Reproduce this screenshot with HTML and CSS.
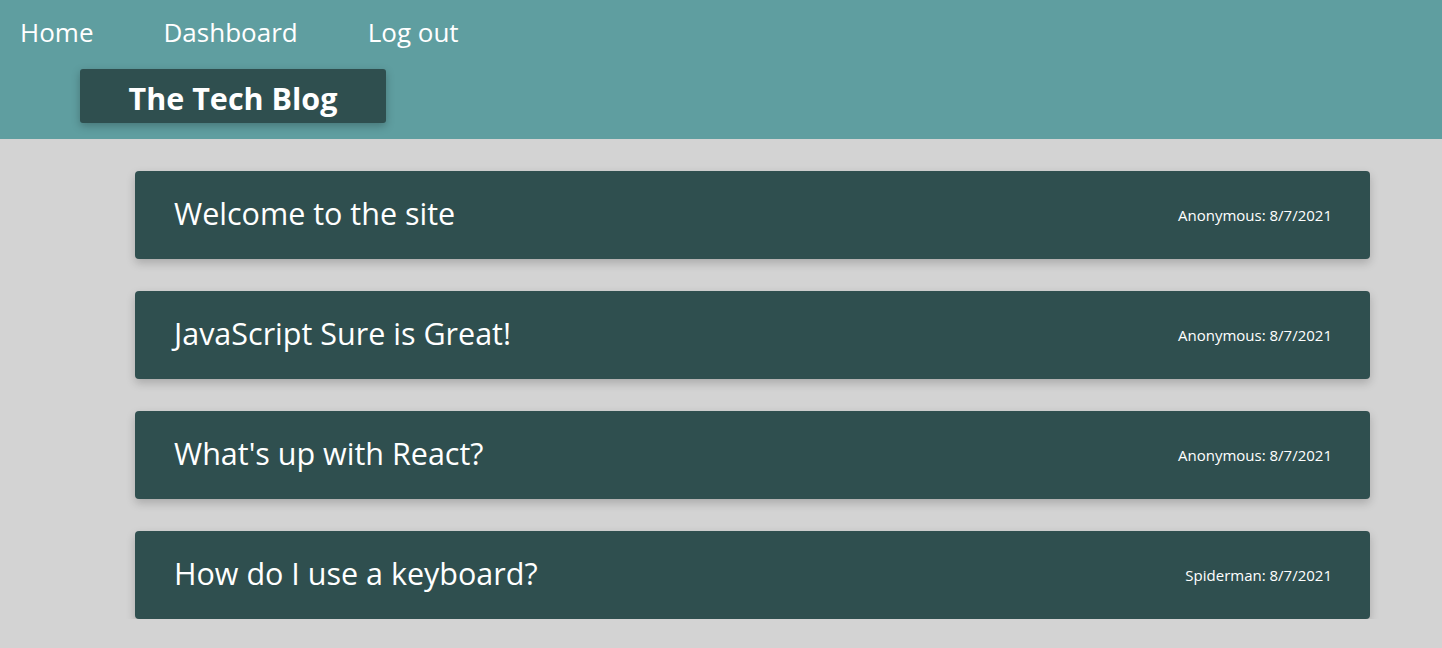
FILE: index.html
```html
<!DOCTYPE html>
<html lang="en">
<head>
<meta charset="utf-8">
<title>The Tech Blog</title>
<link rel="stylesheet" href="styles.css">
</head>
<body>
<header class="site-header">
  <nav class="nav">
    <a class="nav-link" href="#">Home</a>
    <a class="nav-link" href="#">Dashboard</a>
    <a class="nav-link" href="#">Log out</a>
  </nav>
  <h1 class="brand">The Tech Blog</h1>
</header>
<main class="posts">
  <article class="post">
    <h2 class="post-title">Welcome to the site</h2>
    <span class="post-meta">Anonymous: 8/7/2021</span>
  </article>
  <article class="post">
    <h2 class="post-title">JavaScript Sure is Great!</h2>
    <span class="post-meta">Anonymous: 8/7/2021</span>
  </article>
  <article class="post">
    <h2 class="post-title">What's up with React?</h2>
    <span class="post-meta">Anonymous: 8/7/2021</span>
  </article>
  <article class="post">
    <h2 class="post-title">How do I use a keyboard?</h2>
    <span class="post-meta">Spiderman: 8/7/2021</span>
  </article>
</main>
</body>
</html>
```
FILE: styles.css
```css
* { box-sizing: border-box; }
html, body { margin: 0; padding: 0; }
body {
  background: #d3d3d3;
  font-family: "Open Sans", "Noto Sans", sans-serif;
  color: #fff;
}
.site-header {
  background: #5f9ea0;
  height: 139px;
  padding: 12px 0 0 20px;
}
.nav {
  display: flex;
  gap: 70px;
  height: 40px;
  align-items: center;
}
.nav-link {
  color: #fff;
  text-decoration: none;
  font-size: 26px;
  line-height: 40px;
}
.brand {
  margin: 17px 0 0 60px;
  width: 306px;
  height: 54px;
  background: #2f4f4f;
  border-radius: 3px;
  box-shadow: 0 3px 8px rgba(0,0,0,0.25);
  font-size: 30.5px;
  font-weight: 700;
  line-height: 58px;
  text-align: center;
}
.posts {
  display: flex;
  flex-direction: column;
  gap: 32px;
  padding: 32px 72px 0 135px;
}
.post {
  height: 88px;
  background: #2f4f4f;
  border-radius: 4px;
  box-shadow: 0 4px 10px rgba(0,0,0,0.2);
  display: flex;
  align-items: center;
  justify-content: space-between;
  padding: 0 38px 4px 39px;
}
.post-title {
  margin: 0;
  font-size: 30.5px;
  font-weight: 400;
}
.post-meta {
  font-size: 15px;
  padding-top: 4px;
}
```
